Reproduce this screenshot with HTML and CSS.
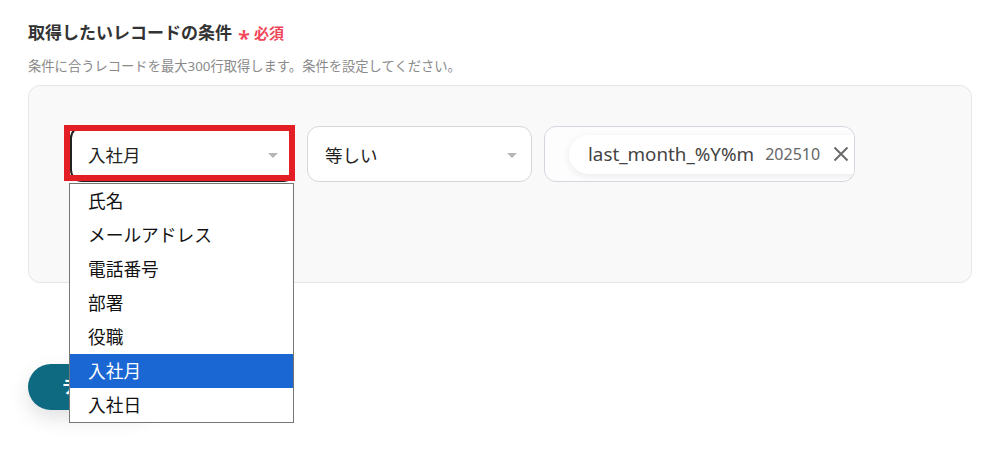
FILE: index.html
```html
<!DOCTYPE html>
<html lang="ja">
<head>
<meta charset="utf-8">
<title>条件</title>
<link rel="stylesheet" href="styles.css">
</head>
<body>
<div class="page">
  <div class="title">取得したいレコードの条件<span class="req"><span class="ast">*</span>必須</span></div>
  <div class="sub">条件に合うレコードを最大300行取得します。条件を設定してください。</div>
  <div class="panel">
    <div class="row">
      <div class="select focused">
        <span class="val">入社月</span>
        <span class="arrow"></span>
        <div class="mark"></div>
        <ul class="list">
          <li>氏名</li>
          <li>メールアドレス</li>
          <li>電話番号</li>
          <li>部署</li>
          <li>役職</li>
          <li class="sel">入社月</li>
          <li>入社日</li>
        </ul>
      </div>
      <div class="select">
        <span class="val">等しい</span>
        <span class="arrow"></span>
      </div>
      <div class="input">
        <div class="chip">
          <span class="chip-name">last_month_%Y%m</span>
          <span class="chip-val">202510</span>
          <svg class="chip-x" width="16" height="16" viewBox="0 0 16 16"><path d="M1.5 1.5L14.5 14.5M14.5 1.5L1.5 14.5" stroke="#6b6b6b" stroke-width="2" fill="none"/></svg>
          <span class="chip-pad"></span>
        </div>
      </div>
    </div>
  </div>
  <div class="btn">テスト</div>
</div>
</body>
</html>
```
FILE: styles.css
```css
* { box-sizing: border-box; }
html, body { margin: 0; background: #fff; }
body { font-family: "Noto Sans", "Noto Sans CJK JP", sans-serif; color: #222; min-height: 454px; }
.page { padding: 21px 24px 60px 28px; min-height: 454px; }
.title { font-size: 17px; line-height: 24px; font-weight: 600; color: #333; display: flex; align-items: center; }
.req { color: #f0465a; font-size: 15px; font-weight: 600; margin-left: 6px; display: flex; align-items: center; }
.ast { font-size: 22px; line-height: 14px; margin-right: 4px; position: relative; top: 4px; }
.sub { font-size: 13.3px; line-height: 20px; color: #8a8a8a; margin-top: 11px; }
.panel { margin-top: 9px; width: 944px; height: 198px; background: #f9f9f9; border: 1px solid #e6e6e6; border-radius: 12px; padding: 40px 0 0 41px; }
.row { display: flex; gap: 12px; }
.select { position: relative; width: 225px; height: 56px; background: #fff; border: 1px solid #d6d6da; border-radius: 12px; display: flex; align-items: center; padding-left: 17px; }
.select.focused { border: 2px solid #222; padding-left: 16px; }
.val { font-size: 17.5px; color: #222; }
.arrow { position: absolute; right: 14px; top: 26px; width: 0; height: 0; border-left: 5px solid transparent; border-right: 5px solid transparent; border-top: 5px solid #b5b5b5; }
.focused .arrow { right: 15px; top: 25px; }
.mark { position: absolute; left: -8px; top: -3px; width: 231px; height: 56px; border: 6px solid #e31e24; }
.list { position: absolute; left: -3px; top: 55px; width: 225px; margin: 0; padding: 0; list-style: none; background: #fff; border: 1px solid #767676; z-index: 2; }
.list li { height: 34px; line-height: 34px; padding-left: 18px; font-size: 17.7px; color: #111; }
.list li.sel { background: #1a67d4; color: #fff; }
.input { width: 311px; height: 56px; background: #fdfdfd; border: 1px solid #d3d7de; border-radius: 12px; overflow: hidden; display: flex; align-items: center; padding-left: 24px; }
.chip { flex: none; height: 39px; background: #fff; border-radius: 20px; box-shadow: 0 2px 8px rgba(0,0,0,0.08); display: flex; align-items: center; padding-left: 19px; }
.chip-name { font-size: 18.8px; color: #444; }
.chip-val { font-size: 16px; color: #666; margin-left: 11px; }
.chip-x { margin-left: 13px; }
.chip-pad { width: 30px; }
.btn { margin-top: 81px; width: 130px; height: 46px; border-radius: 23px; background: #0e6a80; color: #fff; font-size: 17px; line-height: 46px; padding-left: 34px; font-weight: 600; box-shadow: 0 8px 20px rgba(0,0,0,0.12); }
```
